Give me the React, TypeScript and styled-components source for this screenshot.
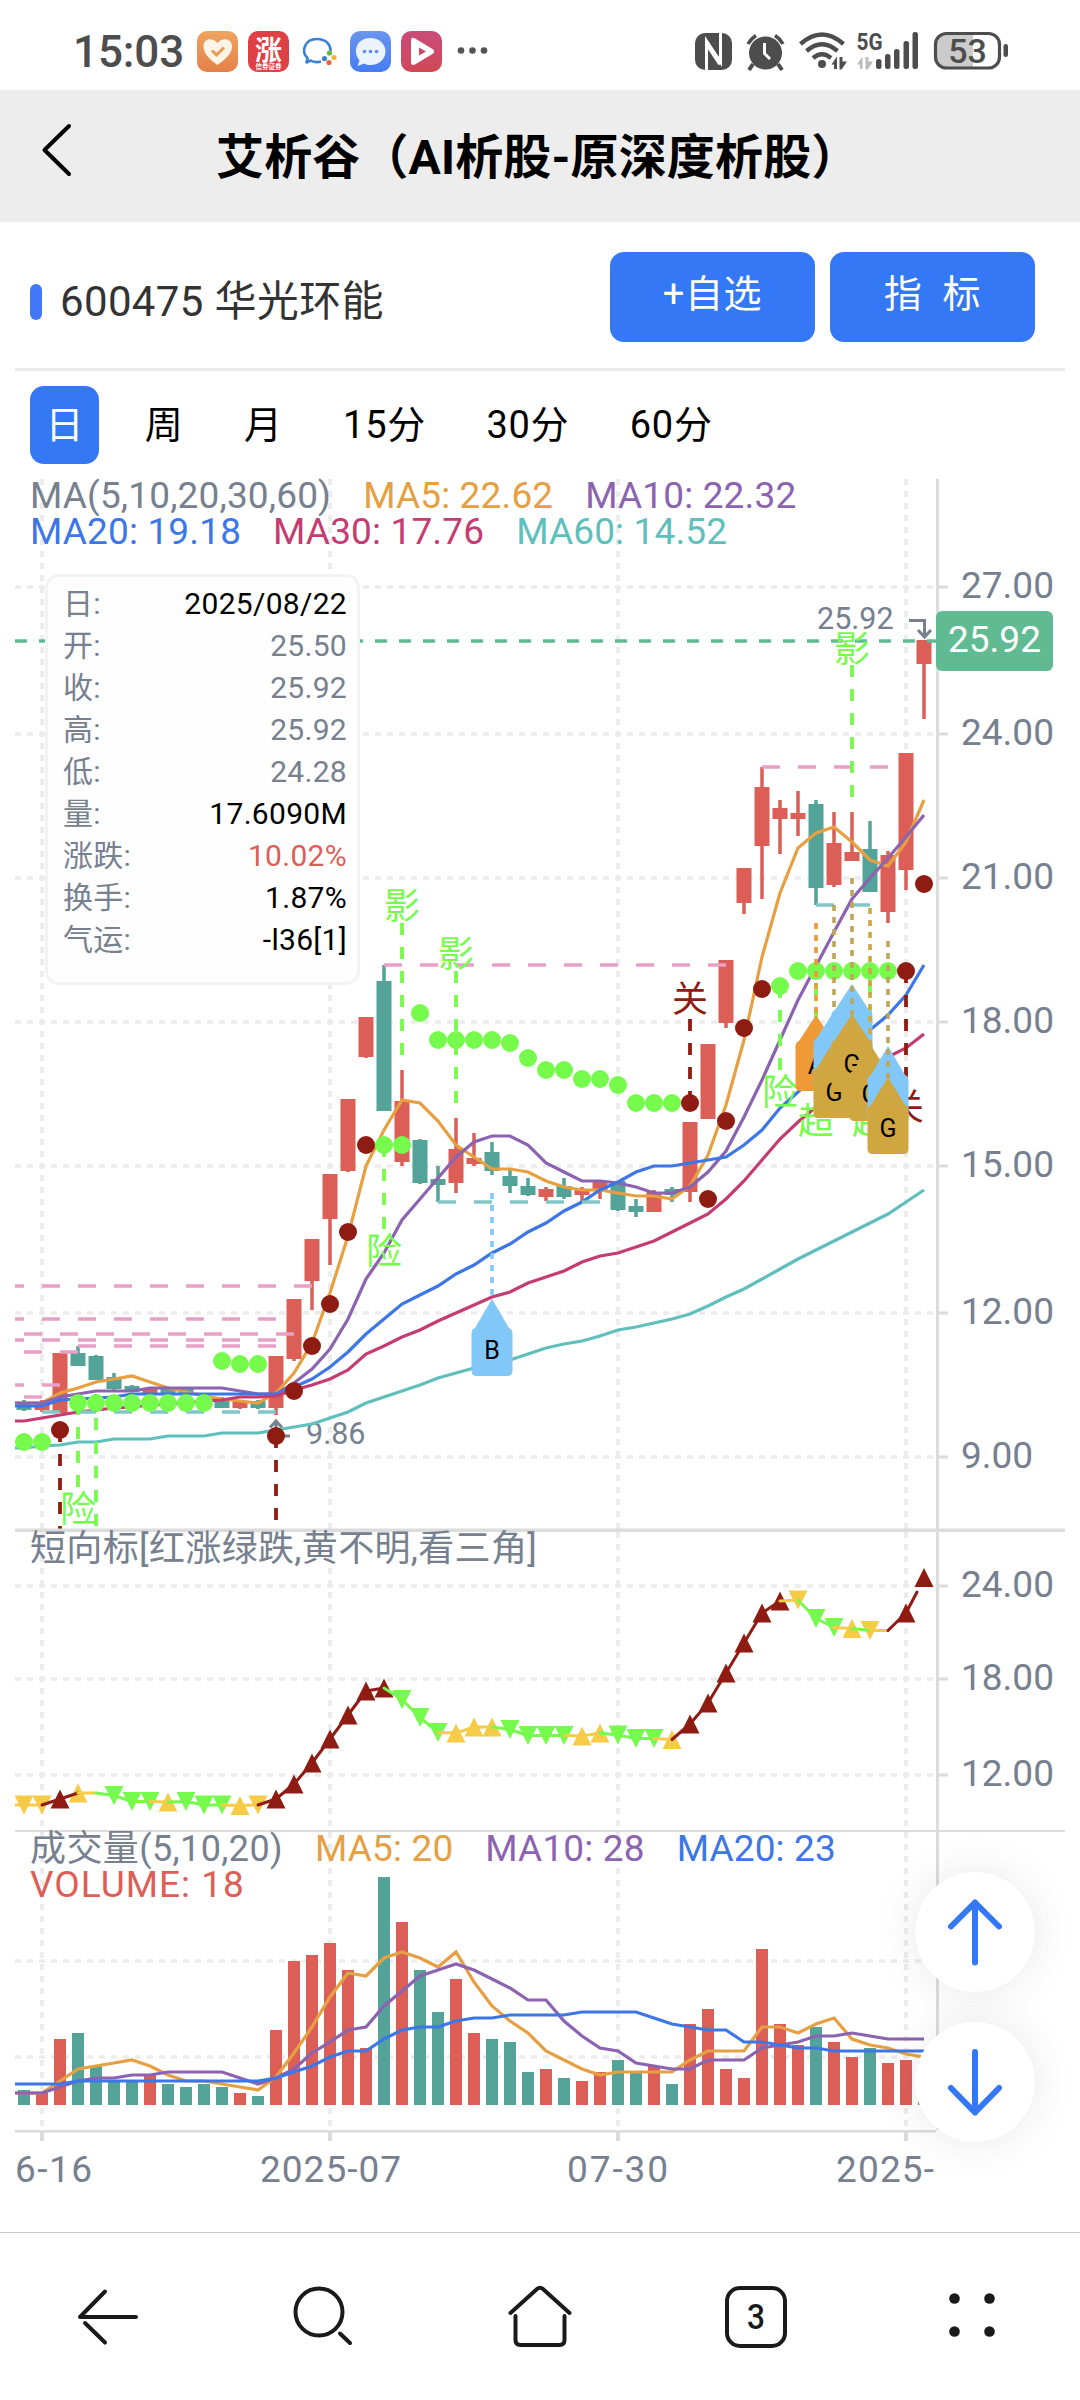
import React from 'react';
import styled, { createGlobalStyle } from 'styled-components';

const FONT = `Roboto, "Noto Sans CJK SC", sans-serif`;

const C = {
  red: '#db5f57',
  teal: '#53a399',
  orange: '#e6a042',
  purple: '#8b63b0',
  blue: '#3d76e6',
  pink: '#c43c71',
  cyan: '#5fbfbd',
  lime: '#76fb4c',
  dark: '#8f1c12',
  yellow: '#f5cb47',
  grey: '#76808f',
  axis: '#dcdcdc',
  grid: '#ececec',
  resist: '#e8a0c6',
  support: '#82c7c8',
  last: '#61bb92',
  primary: '#3478f6',
  sky: '#81c8f8',
  gold: '#cfa640',
  amber: '#ee9a37',
};

const GlobalStyle = createGlobalStyle`
  * { box-sizing: border-box; }
  html, body { margin: 0; padding: 0; background: #fff; }
  body { font-family: ${FONT}; -webkit-font-smoothing: antialiased; }
`;

/* ---------- layout ---------- */

const Screen = styled.div`
  width: 1080px;
  height: 2400px;
  display: flex;
  flex-direction: column;
  background: #fff;
  overflow: hidden;
`;

const StatusBar = styled.header`
  flex: none;
  height: 90px;
  display: flex;
  align-items: center;
  justify-content: space-between;
  padding: 14px 71px 0 73px;
  color: #4d4d4d;
`;

const StatusGroup = styled.div<{ $gap: number }>`
  display: flex;
  align-items: center;
  gap: ${(p) => p.$gap}px;
`;

const Clock = styled.span`
  font-size: 44px;
  line-height: 44px;
  font-weight: 500;
  width: 113px;
  letter-spacing: -0.1px;
`;

const TitleBar = styled.div`
  flex: none;
  height: 132px;
  display: flex;
  align-items: center;
  background: #ededed;
`;

const BackButton = styled.button`
  border: 0;
  background: none;
  padding: 0 0 12px 38px;
  width: 216px;
  text-align: left;
  line-height: 0;
`;

const Title = styled.h1`
  margin: 3px 0 0;
  font-size: 48px;
  line-height: 60px;
  font-weight: 700;
  color: #000;
  white-space: nowrap;
  letter-spacing: 0.15px;
`;

const StockRow = styled.section`
  flex: none;
  display: flex;
  align-items: center;
  height: 149px;
  margin: 0 15px;
  padding: 0 30px 0 15px;
  border-bottom: 3px solid #ebebeb;
`;

const Marker = styled.i`
  width: 12px;
  height: 36px;
  border-radius: 6px;
  background: #4078f8;
  margin-top: 14px;
`;

const StockName = styled.h2`
  flex: 1;
  margin: 14px 0 0 18px;
  font-size: 42px;
  line-height: 50px;
  font-weight: 400;
  color: #333;
  letter-spacing: 0.35px;
`;

const ActionButton = styled.button`
  width: 205px;
  height: 90px;
  margin: 3px 0 0 15px;
  padding: 0 0 5px;
  border: 0;
  border-radius: 14px;
  background: ${C.primary};
  color: #fff;
  font-family: ${FONT};
  font-size: 38px;
  line-height: 44px;
  letter-spacing: 0.6px;
  white-space: pre;
`;

const Tabs = styled.nav`
  flex: none;
  display: flex;
  gap: 30px;
  height: 106px;
  padding: 15px 30px 0;
`;

const Tab = styled.button<{ $active?: boolean }>`
  height: 78px;
  border: 0;
  padding: 0 15px 0 15.5px;
  border-radius: 14px;
  font-family: ${FONT};
  font-size: 38px;
  line-height: 78px;
  letter-spacing: 0.7px;
  background: ${(p) => (p.$active ? C.primary : 'transparent')};
  color: ${(p) => (p.$active ? '#fff' : '#000')};
`;

const ChartArea = styled.main`
  position: relative;
  flex: none;
  display: flex;
  flex-direction: column;
  width: 1050px;
  height: 1755px;
  margin: 0 15px;
`;

const PaneBox = styled.section<{ $height: number }>`
  position: relative;
  flex: none;
  height: ${(p) => p.$height}px;
`;

const PaneSvg = styled.svg`
  display: block;
`;

const Legend = styled.div`
  position: absolute;
  left: 15px;
  top: 1px;
  width: 900px;
`;

const LegendRow = styled.div`
  display: flex;
  gap: 32px;
  height: 36px;
`;

const LegendItem = styled.span<{ $color: string; $size?: number; $spacing?: number }>`
  color: ${(p) => p.$color};
  font-size: ${(p) => p.$size ?? 37}px;
  line-height: 36px;
  letter-spacing: ${(p) => p.$spacing ?? 0.15}px;
  white-space: nowrap;
`;

const Tip = styled.dl`
  position: absolute;
  left: 30px;
  top: 97px;
  width: 315px;
  height: 411px;
  margin: 0;
  padding: 6px 10px 0 15px;
  border: 3px solid #f2f3f4;
  border-radius: 14px;
  background: #fefefe;
`;

const TipRow = styled.div`
  display: flex;
  justify-content: space-between;
  height: 42px;
  font-size: 30px;
  line-height: 42px;
  letter-spacing: 0.3px;
`;

const TipLabel = styled.dt`
  color: ${C.grey};
`;

const TipValue = styled.dd<{ $color?: string }>`
  margin: 0;
  color: ${(p) => p.$color ?? '#000'};
`;

const FloatStack = styled.div`
  position: absolute;
  left: 900px;
  top: 1395px;
  display: flex;
  flex-direction: column;
  gap: 30px;
`;

const FloatButton = styled.button`
  width: 120px;
  height: 120px;
  border: 0;
  padding: 0;
  border-radius: 50%;
  background: #fff;
  box-shadow: 0 0 42px rgba(60, 70, 60, 0.12);
  line-height: 0;
`;

const BottomNav = styled.footer`
  flex: none;
  height: 168px;
  display: flex;
  border-top: 1px solid #c9c9c9;
  background: #fff;
`;

const NavItem = styled.button`
  flex: 1;
  border: 0;
  padding: 51px 0 0;
  background: none;
  display: flex;
  justify-content: center;
  align-items: flex-start;
`;

/* ---------- chart data (page pixels, one slot every 18px) ---------- */

const px = (i: number) => 24 + i * 18;

type Candle = [string, number, number, number, number];
const CANDLES: Candle[] = [
  ['t', 1400, 1402, 1410, 1411],
  ['r', 1400, 1402, 1410, 1412],
  ['r', 1353, 1353, 1413, 1413],
  ['t', 1346, 1353, 1366, 1366],
  ['t', 1355, 1356, 1380, 1380],
  ['t', 1373, 1377, 1389, 1391],
  ['t', 1385, 1386, 1392, 1392],
  ['r', 1389, 1389, 1394, 1394],
  ['t', 1389, 1389, 1395, 1395],
  ['t', 1389, 1389, 1395, 1395],
  ['t', 1398, 1398, 1403, 1403],
  ['t', 1397, 1401, 1408, 1408],
  ['r', 1401, 1401, 1408, 1409],
  ['t', 1400, 1401, 1408, 1409],
  ['r', 1356, 1356, 1408, 1415],
  ['r', 1299, 1299, 1359, 1361],
  ['r', 1239, 1239, 1281, 1310],
  ['r', 1174, 1174, 1219, 1265],
  ['r', 1099, 1099, 1171, 1172],
  ['r', 1017, 1017, 1057, 1058],
  ['t', 965, 981, 1111, 1111],
  ['r', 1070, 1101, 1162, 1166],
  ['t', 1139, 1140, 1183, 1184],
  ['t', 1166, 1179, 1185, 1202],
  ['r', 1118, 1149, 1183, 1193],
  ['r', 1133, 1158, 1164, 1166],
  ['t', 1142, 1152, 1171, 1175],
  ['t', 1170, 1176, 1186, 1193],
  ['t', 1178, 1186, 1195, 1196],
  ['r', 1187, 1189, 1197, 1201],
  ['t', 1178, 1186, 1197, 1199],
  ['r', 1187, 1189, 1195, 1201],
  ['r', 1181, 1181, 1190, 1199],
  ['t', 1181, 1181, 1210, 1211],
  ['t', 1199, 1206, 1212, 1217],
  ['r', 1190, 1192, 1212, 1212],
  ['t', 1187, 1189, 1195, 1202],
  ['r', 1122, 1122, 1192, 1202],
  ['r', 1044, 1044, 1119, 1119],
  ['r', 960, 960, 1023, 1028],
  ['r', 868, 868, 903, 914],
  ['r', 767, 787, 846, 899],
  ['r', 800, 808, 819, 854],
  ['r', 791, 813, 819, 836],
  ['t', 800, 804, 888, 905],
  ['r', 812, 843, 885, 887],
  ['r', 812, 852, 861, 861],
  ['t', 821, 849, 892, 892],
  ['r', 851, 855, 912, 923],
  ['r', 753, 753, 870, 890],
  ['r', 640, 640, 664, 719],
];

const MA5 = [
  1403, 1403, 1393, 1388, 1382, 1379, 1376, 1382, 1388, 1392, 1396, 1399, 1401, 1403, 1393, 1373, 1343, 1293, 1236,
  1166, 1130, 1100, 1103, 1121, 1145, 1157, 1169, 1169, 1172, 1181, 1187, 1190, 1190, 1193, 1196, 1196, 1199, 1186,
  1155, 1105, 1040, 957, 893, 848, 833, 827, 842, 860, 866, 842, 800,
];
const MA10 = [
  1403, 1403, 1397, 1394, 1391, 1391, 1391, 1388, 1388, 1388, 1388, 1388, 1391, 1394, 1394, 1383, 1369, 1349, 1319,
  1279, 1253, 1220, 1199, 1178, 1157, 1142, 1136, 1136, 1145, 1163, 1172, 1181, 1181, 1183, 1187, 1193, 1193, 1187,
  1172, 1151, 1117, 1080, 1040, 1000, 966, 932, 899, 878, 858, 837, 815,
];
const MA20 = [
  1406, 1406, 1400, 1399, 1398, 1397, 1394, 1394, 1394, 1394, 1394, 1394, 1394, 1394, 1394, 1387, 1379, 1367, 1352,
  1334, 1319, 1304, 1295, 1286, 1274, 1265, 1253, 1244, 1232, 1223, 1211, 1202, 1190, 1182, 1172, 1166, 1166, 1163,
  1160, 1157, 1145, 1130, 1108, 1092, 1075, 1058, 1044, 1030, 1015, 995, 965,
];
const MA30 = [
  1421, 1418, 1415, 1412, 1410, 1408, 1407, 1405, 1404, 1403, 1401, 1400, 1397, 1397, 1396, 1390, 1385, 1379, 1370,
  1354, 1346, 1337, 1330, 1321, 1313, 1305, 1297, 1292, 1283, 1277, 1271, 1262, 1256, 1253, 1247, 1241, 1232, 1223,
  1214, 1199, 1181, 1160, 1139, 1122, 1107, 1094, 1080, 1066, 1057, 1048, 1034,
];
const MA60 = [
  1448, 1446, 1445, 1442, 1442, 1439, 1439, 1439, 1436, 1436, 1436, 1433, 1433, 1433, 1430, 1427, 1424, 1418, 1412,
  1403, 1397, 1391, 1385, 1378, 1373, 1368, 1364, 1360, 1354, 1348, 1344, 1341, 1336, 1330, 1327, 1323, 1319, 1314,
  1306, 1297, 1289, 1279, 1269, 1259, 1250, 1241, 1232, 1223, 1214, 1202, 1190,
];

type Dot = [number, number, string];
const run = (from: number, to: number, y: number, color: string): Dot[] =>
  Array.from({ length: to - from + 1 }, (_, k) => [from + k, y, color] as Dot);

const DOTS: Dot[] = [
  ...run(0, 1, 1442, C.lime),
  [2, 1430, C.dark],
  ...run(3, 10, 1403, C.lime),
  [11, 1361, C.lime],
  ...run(12, 13, 1364, C.lime),
  [14, 1436, C.dark], [15, 1391, C.dark], [16, 1346, C.dark], [17, 1304, C.dark], [18, 1232, C.dark], [19, 1145, C.dark],
  ...run(20, 21, 1145, C.lime),
  [22, 1013, C.lime],
  ...run(23, 26, 1040, C.lime),
  [27, 1043, C.lime], [28, 1058, C.lime],
  ...run(29, 30, 1070, C.lime),
  ...run(31, 32, 1079, C.lime),
  [33, 1085, C.lime],
  ...run(34, 36, 1103, C.lime),
  [37, 1103, C.dark], [38, 1199, C.dark], [39, 1121, C.dark], [40, 1028, C.dark], [41, 989, C.dark],
  [42, 986, C.lime],
  ...run(43, 48, 971, C.lime),
  [49, 971, C.dark], [50, 884, C.dark],
];

const LEVELS: [number, number, number, string][] = [
  [1286, 6, 312, C.resist], [1319, 6, 276, C.resist], [1334, 24, 294, C.resist], [1340, 6, 276, C.resist],
  [1346, 78, 276, C.resist], [1352, 24, 78, C.resist], [1385, 6, 60, C.resist], [1397, 24, 42, C.resist],
  [965, 384, 726, C.resist], [767, 762, 888, C.resist],
  [1412, 42, 276, C.support], [1202, 438, 600, C.support], [905, 816, 870, C.support],
];

const STEMS: [number, number, number, string][] = [
  [60, 1430, 1529, C.dark], [276, 1436, 1520, C.dark], [78, 1403, 1488, C.lime], [96, 1394, 1528, C.lime],
  [384, 1145, 1230, C.lime], [402, 923, 1056, C.lime], [456, 971, 1104, C.lime], [690, 1019, 1104, C.dark],
  [780, 986, 1071, C.lime], [816, 983, 1100, C.lime], [870, 983, 1100, C.lime], [852, 665, 798, C.lime],
  [906, 971, 1086, C.dark],
];

const SIGNS: [number, number, string, string][] = [
  [78, 1522, '险', C.lime], [384, 1264, '险', C.lime], [402, 919, '影', C.lime], [456, 967, '影', C.lime],
  [690, 1012, '关', C.dark], [780, 1105, '险', C.lime], [816, 1134, '超', C.lime], [870, 1134, '超', C.lime],
  [852, 662, '影', C.lime], [906, 1120, '关', C.dark],
];

/* y, direction, colour of the marker, colour of the segment leading to it */
const TREND: [number, string, string, string?][] = [
  [1805, 'd', 'y'], [1805, 'd', 'y'], [1799, 'u', 'r'], [1793, 'u', 'y', 'r'], [1793, '', 'y'],
  [1795.5, 'd', 'g'], [1801.5, 'd', 'g'], [1801.5, 'd', 'g'], [1802, 'u', 'y'], [1801.5, 'd', 'g'],
  [1805, 'd', 'g'], [1805, 'd', 'g'], [1805.5, 'u', 'y'], [1805, 'd', 'y'], [1799, 'u', 'r'],
  [1784, 'u', 'r'], [1763, 'u', 'r'], [1739, 'u', 'r'], [1715, 'u', 'r'], [1691, 'u', 'r'], [1688, 'u', 'r'],
  [1699.5, 'd', 'g'], [1717.5, 'd', 'g'], [1732.5, 'd', 'g'], [1733, 'u', 'y'], [1727, 'u', 'y'], [1727, 'u', 'y'],
  [1729.5, 'd', 'g'], [1735.5, 'd', 'g'], [1735.5, 'd', 'g'], [1735.5, 'd', 'g'], [1736, 'u', 'y'], [1733, 'u', 'y'],
  [1735, 'd', 'g'], [1738.5, 'd', 'g'], [1738.5, 'd', 'g'], [1739.5, 'u', 'y'], [1724, 'u', 'r'], [1703, 'u', 'r'],
  [1673, 'u', 'r'], [1643, 'u', 'r'], [1613, 'u', 'r'], [1601, 'u', 'r'], [1600, 'd', 'y'], [1618.5, 'd', 'g'],
  [1627.5, 'd', 'g'], [1628.5, 'u', 'y'], [1630.5, 'd', 'y', 'g'], [1630.5, '', 'y'], [1613, 'u', 'r'], [1577.5, 'u', 'r'],
];
const TREND_COLOR: Record<string, string> = { y: C.yellow, r: C.dark, g: C.lime };

const VOLUME: [string, number][] = [
  ['t', 2090], ['r', 2093], ['r', 2039], ['t', 2033], ['t', 2066], ['t', 2081], ['t', 2081], ['r', 2075], ['t', 2084],
  ['t', 2087], ['t', 2084], ['t', 2087], ['r', 2093], ['t', 2096], ['r', 2030], ['r', 1961], ['r', 1955], ['r', 1943],
  ['r', 1970], ['r', 2048], ['t', 1877], ['r', 1922], ['t', 1970], ['t', 2012], ['r', 1979], ['r', 2033], ['t', 2039],
  ['t', 2042], ['t', 2072], ['r', 2069], ['t', 2078], ['r', 2081], ['r', 2072], ['t', 2060], ['t', 2072], ['r', 2066],
  ['t', 2084], ['r', 2024], ['r', 2009], ['r', 2069], ['r', 2078], ['r', 1949], ['r', 2024], ['r', 2045], ['t', 2027],
  ['r', 2042], ['r', 2057], ['t', 2048], ['r', 2063], ['r', 2060], ['r', 2062],
];
const VMA5 = [
  2093, 2093, 2081, 2069, 2066, 2063, 2060, 2066, 2075, 2081, 2081, 2084, 2087, 2090, 2077, 2053, 2027, 1997, 1973,
  1976, 1958, 1952, 1958, 1967, 1952, 1982, 2006, 2021, 2033, 2051, 2060, 2069, 2075, 2072, 2072, 2072, 2072, 2060,
  2051, 2051, 2051, 2027, 2027, 2033, 2024, 2018, 2039, 2045, 2048, 2054, 2057,
];
const VMA10 = [
  2093, 2093, 2087, 2081, 2078, 2078, 2075, 2075, 2072, 2072, 2072, 2072, 2078, 2084, 2078, 2069, 2053, 2042, 2030,
  2027, 2006, 1991, 1976, 1970, 1964, 1970, 1979, 1988, 2000, 2000, 2021, 2036, 2048, 2051, 2063, 2066, 2069, 2069,
  2060, 2060, 2060, 2048, 2045, 2042, 2036, 2036, 2033, 2036, 2039, 2039, 2039,
];
const VMA20 = [
  2084, 2084, 2084, 2081, 2081, 2081, 2081, 2081, 2081, 2081, 2081, 2081, 2081, 2081, 2078, 2072, 2066, 2057, 2051,
  2051, 2039, 2030, 2027, 2027, 2021, 2018, 2018, 2015, 2015, 2015, 2015, 2012, 2012, 2012, 2012, 2018, 2024, 2027,
  2030, 2030, 2042, 2042, 2045, 2048, 2048, 2051, 2051, 2051, 2051, 2051, 2051,
];

/* ---------- chart parts ---------- */

const GRID_X = [42, 330, 618, 906];

const Grid = ({ top, bottom, rows }: { top: number; bottom: number; rows: number[] }) => (
  <g stroke={C.grid} strokeWidth={4} strokeDasharray="6 6">
    {rows.map((y) => (
      <line key={y} x1={15} x2={937} y1={y} y2={y} strokeWidth={3.5} />
    ))}
    {GRID_X.map((x) => (
      <line key={x} x1={x} x2={x} y1={top} y2={bottom} />
    ))}
  </g>
);

const AxisLabels = ({ rows }: { rows: [number, string][] }) => (
  <g>
    {rows.map(([y, label]) => (
      <React.Fragment key={label}>
        <line x1={939} x2={948} y1={y} y2={y} stroke={C.axis} strokeWidth={3} />
        <text x={961} y={y + 11} fontSize={37} fontFamily={FONT} fill={C.grey}>
          {label}
        </text>
      </React.Fragment>
    ))}
  </g>
);

const Line = ({ data, color }: { data: number[]; color: string }) => (
  <polyline
    fill="none"
    stroke={color}
    strokeWidth={3.2}
    points={[`15,${data[0]}`, ...data.map((y, i) => `${px(i)},${y}`)].join(' ')}
  />
);

const Pin = ({ x, tip, shoulder, bottom, color, label, textY }: {
  x: number; tip: number; shoulder: number; bottom: number; color: string; label?: string; textY?: number;
}) => (
  <g>
    <path
      fill={color}
      d={`M${x} ${tip} L${x + 17} ${shoulder - 3} Q${x + 20.5} ${shoulder - 2} ${x + 20.5} ${shoulder + 3} V${bottom - 5}
        Q${x + 20.5} ${bottom} ${x + 15.5} ${bottom} H${x - 15.5} Q${x - 20.5} ${bottom} ${x - 20.5} ${bottom - 5}
        V${shoulder + 3} Q${x - 20.5} ${shoulder - 2} ${x - 17} ${shoulder - 3} Z`}
    />
    {label && (
      <text x={x} y={textY} fontSize={25} fontFamily={FONT} fill="#000" textAnchor="middle">{label}</text>
    )}
  </g>
);

const Dotted = ({ x, y1, y2, color }: { x: number; y1: number; y2: number; color: string }) => (
  <line x1={x} x2={x} y1={y1} y2={y2} stroke={color} strokeWidth={3.6} strokeDasharray="6 6" />
);

const PriceSvg = () => (
  <PaneSvg width={1050} height={1053} viewBox="15 477 1050 1053">
    <Grid top={479} bottom={1530} rows={[587, 734, 878, 1022, 1166, 1313, 1457]} />
    <rect x={936} y={479} width={3} height={1051} fill={C.axis} />
    {CANDLES.map(([k, hi, a, b, lo], i) => {
      const color = k === 'r' ? C.red : C.teal;
      return (
        <g key={i} fill={color}>
          <rect x={px(i) - 1.75} y={hi} width={3.5} height={lo - hi} />
          <rect x={px(i) - 7.5} y={a} width={15} height={b - a} />
        </g>
      );
    })}
    <g fill="none" stroke={C.grey} strokeWidth={3}>
      <path d="M909 620.5 H924.5 V637 M918 630 L924.5 637 L931 630" />
      <path d="M290 1436 H276 V1421 M270 1427.5 L276 1421 L282 1427.5" />
    </g>
    <text x={817} y={629} fontSize={30.5} fontFamily={FONT} fill={C.grey}>25.92</text>
    <text x={306} y={1444} fontSize={30.5} fontFamily={FONT} fill={C.grey}>9.86</text>
    <Line data={MA5} color={C.orange} />
    <Line data={MA10} color={C.purple} />
    <Line data={MA20} color={C.blue} />
    <Line data={MA30} color={C.pink} />
    <Line data={MA60} color={C.cyan} />
    {LEVELS.map(([y, x1, x2, color], i) => (
      <line key={i} x1={x1} x2={x2} y1={y} y2={y} stroke={color} strokeWidth={3.4} strokeDasharray="18 18" />
    ))}
    {STEMS.map(([x, y1, y2, color], i) => (
      <line key={i} x1={x} x2={x} y1={y1} y2={y2} stroke={color} strokeWidth={3.8} strokeDasharray="12 12" />
    ))}
    {DOTS.map(([i, y, color]) => (
      <circle key={i} cx={px(i)} cy={y} r={9} fill={color} />
    ))}
    <line x1={15} x2={936} y1={641} y2={641} stroke={C.last} strokeWidth={3.4} strokeDasharray="12 12" />
    {SIGNS.map(([x, y, label, color], i) => (
      <text key={i} x={x} y={y} fontSize={36} fontFamily={FONT} fill={color} textAnchor="middle">{label}</text>
    ))}
    <Dotted x={492} y1={1193} y2={1300} color={C.sky} />
    <Pin x={492} tip={1299} shoulder={1331} bottom={1376} color={C.sky} label="B" textY={1359} />
    <Dotted x={816} y1={923} y2={1015} color={C.amber} />
    <Pin x={816} tip={1015} shoulder={1044} bottom={1091} color={C.amber} label="A" textY={1074} />
    <Pin x={834} tip={1011} shoulder={1041} bottom={1088} color={C.sky} />
    <Dotted x={834} y1={905} y2={1040} color="#bda65a" />
    <Pin x={834} tip={1041} shoulder={1071} bottom={1118} color={C.gold} label="G" textY={1101} />
    <Pin x={852} tip={984} shoulder={1013} bottom={1060} color={C.sky} />
    <Dotted x={852} y1={878} y2={1015} color="#bda65a" />
    <Pin x={852} tip={1014} shoulder={1043} bottom={1090} color={C.gold} label="G" textY={1073} />
    <Dotted x={870} y1={908} y2={1044} color={C.gold} />
    <Pin x={870} tip={1044} shoulder={1074} bottom={1121} color={C.gold} label="G" textY={1103} />
    <Pin x={888} tip={1046} shoulder={1078} bottom={1124} color={C.sky} />
    <Dotted x={888} y1={941} y2={1078} color="#bda65a" />
    <Pin x={888} tip={1077} shoulder={1108} bottom={1154} color={C.gold} label="G" textY={1137} />
    <AxisLabels
      rows={[[587, '27.00'], [734, '24.00'], [878, '21.00'], [1022, '18.00'], [1166, '15.00'], [1313, '12.00'], [1457, '9.00']]}
    />
    <rect x={936} y={611} width={117} height={60} rx={6} fill={C.last} />
    <text x={948} y={652} fontSize={37} fontFamily={FONT} fill="#fff">25.92</text>
    <rect x={15} y={1528.5} width={1050} height={3} fill={C.axis} />
  </PaneSvg>
);

const TrendSvg = () => (
  <PaneSvg width={1050} height={300} viewBox="15 1530 1050 300">
    <rect x={15} y={1529} width={1050} height={3} fill={C.axis} />
    <Grid top={1532} bottom={1830} rows={[1586, 1679, 1775]} />
    <rect x={936} y={1530} width={3} height={300} fill={C.axis} />
    {TREND.map(([y, dir, c], i) => {
      const x = px(i);
      if (!dir) return null;
      const s = dir === 'u' ? 1 : -1;
      return <polygon key={i} fill={TREND_COLOR[c]} points={`${x - 9.5},${y + 9.5 * s} ${x + 9.5},${y + 9.5 * s} ${x},${y - 9.5 * s}`} />;
    })}
    {TREND.map(([y, , c, seg], i) => {
      const last = i === 50;
      return (
        <line
          key={i}
          x1={i ? px(i - 1) : 15}
          y1={i ? TREND[i - 1][0] : y}
          x2={last ? 917 : px(i)}
          y2={last ? 1592 : y}
          stroke={TREND_COLOR[seg ?? c]}
          strokeWidth={3}
          strokeLinecap="round"
        />
      );
    })}
    <AxisLabels rows={[[1586, '24.00'], [1679, '18.00'], [1775, '12.00']]} />
  </PaneSvg>
);

const VolumeSvg = () => (
  <PaneSvg width={1050} height={300} viewBox="15 1830 1050 300">
    <Grid top={1832} bottom={2130} rows={[1961, 2057]} />
    <rect x={15} y={1829} width={1050} height={3} fill={C.axis} />
    <rect x={936} y={1830} width={3} height={300} fill={C.axis} />
    {VOLUME.map(([k, y], i) => (
      <rect key={i} x={px(i) - 6} y={y} width={12} height={2105 - y} fill={k === 'r' ? C.red : C.teal} />
    ))}
    <Line data={VMA5} color={C.orange} />
    <Line data={VMA10} color={C.purple} />
    <Line data={VMA20} color={C.blue} />
  </PaneSvg>
);

const TimeAxisSvg = () => (
  <PaneSvg width={1050} height={102} viewBox="15 2130 1050 102">
    <rect x={15} y={2129} width={921} height={3.5} fill={C.axis} />
    {GRID_X.map((x) => (
      <rect key={x} x={x - 2} y={2132} width={4} height={9} fill={C.axis} />
    ))}
    <g fontSize={37} fontFamily={FONT} fill={C.grey}>
      <text x={15} y={2182} textLength={77}>6-16</text>
      <text x={260} y={2182} textLength={141}>2025-07</text>
      <text x={567} y={2182} textLength={101}>07-30</text>
      <text x={836} y={2182} textLength={98}>2025-</text>
    </g>
  </PaneSvg>
);

/* ---------- status bar icons ---------- */

const AppIcons = () => (
  <svg width={296} height={42} viewBox="194 31 296 42">
    <defs>
      <linearGradient id="ga" x1="0" y1="0" x2="0" y2="1"><stop offset="0" stopColor="#eea45f" /><stop offset="1" stopColor="#e5804a" /></linearGradient>
      <linearGradient id="gb" x1="0" y1="0" x2="0" y2="1"><stop offset="0" stopColor="#6a96ee" /><stop offset="1" stopColor="#457df3" /></linearGradient>
      <linearGradient id="gc" x1="0" y1="0" x2="0" y2="1"><stop offset="0" stopColor="#c94c7c" /><stop offset="1" stopColor="#cf4954" /></linearGradient>
    </defs>
    <rect x={197} y={31} width={41} height={41} rx={10} fill="url(#ga)" />
    <path d="M217.500 65 C209 59 203.500 53 203.500 46.500 C203.500 38 213 37 217.500 43 C222 37 232 38 232 46.500 C232 53 226 59 217.500 65Z" fill="#fdf3e6" />
    <path d="M212 50.500 L216.500 55 L224 47.500" fill="none" stroke="#e99b52" strokeWidth={3} />
    <rect x={248} y={31} width={41} height={41} rx={10} fill="#df4044" />
    <text x={268.500} y={60} fontSize={27} fontWeight={700} fontFamily={FONT} fill="#fff" textAnchor="middle">涨</text>
    <text x={268.500} y={69} fontSize={6.500} fontWeight={700} fontFamily={FONT} fill="#fff" textAnchor="middle">信券证券</text>
    <path d="M321 61.500 C317 62.500 313 62 310.500 60.500 L306.500 62.500 L307.500 58 C301 52 304 39 317 39 C327 39 331 46 330.500 51" fill="none" stroke="#3a80d6" strokeWidth={2.600} strokeLinejoin="round" />
    <circle cx={329.500} cy={53} r={2.600} fill="#5fb83c" />
    <circle cx={324.500} cy={58.500} r={2.600} fill="#3a80d6" />
    <circle cx={334} cy={57.500} r={2.600} fill="#f1b734" />
    <circle cx={329} cy={62.500} r={2.600} fill="#e2663a" />
    <rect x={350} y={31} width={41} height={41} rx={10} fill="url(#gb)" />
    <path d="M370.500 38 C379 38 385.500 44 385.500 51.500 C385.500 59 379 65 370.500 65 C368 65 366 64.500 364 63.500 L357.500 66 L359.500 60.500 C352 51 357 38 370.500 38Z" fill="#eaf3fe" />
    <g fill="#5a8df0"><circle cx={364.500} cy={51.500} r={1.800} /><circle cx={370.500} cy={51.500} r={1.800} /><circle cx={376.500} cy={51.500} r={1.800} /></g>
    <rect x={401} y={31} width={41} height={41} rx={10} fill="url(#gc)" />
    <path d="M411 40.500 Q411 36.500 415 38.500 L432.500 49 Q436 51.500 432.500 54 L415 64.500 Q411 66 411 62Z" fill="#fff" />
    <path d="M419 47.500 L426 51.500 L419 55.500Z" fill="#cb4a68" />
    <g fill="#555"><circle cx={461} cy={50.500} r={3.300} /><circle cx={472.500} cy={50.500} r={3.300} /><circle cx={484} cy={50.500} r={3.300} /></g>
  </svg>
);

const SystemIcons = () => (
  <svg width={316} height={44} viewBox="693 30 316 44">
    <g fill="#4d4d4d">
      <rect x={695} y={33} width={37} height={37} rx={10} />
      <path d="M706.500 71 V41 L720.500 62 V32" fill="none" stroke="#fff" strokeWidth={3} />
      <path d="M706.500 43 L720.500 64" stroke="#fff" strokeWidth={4.500} />
      <circle cx={765.500} cy={53} r={16.500} />
      <path d="M748 44 A23 23 0 0 1 756 35.500 M775 35.500 A23 23 0 0 1 783 44" fill="none" stroke="#4d4d4d" strokeWidth={3.600} />
      <path d="M753 64 L749 70 M778 64 L782 70" stroke="#4d4d4d" strokeWidth={4} />
      <path d="M764.500 43 V53.500 L770 59" fill="none" stroke="#fff" strokeWidth={3} />
      <g fill="none" stroke="#4d4d4d" strokeWidth={4.400}>
        <path d="M800.500 44 Q822 25 843.500 44" />
        <path d="M806.500 51 Q822 37.500 837.500 51" />
        <path d="M813 58 Q822 50.500 831 58" />
      </g>
      <circle cx={822} cy={64} r={4} />
      <path d="M831.500 64.500 L837 56.500 V69 H834 V64.500Z M847 61.500 L841.500 69.500 H839.500 V57 H842.500 V61.500Z" />
      <text x={856.500} y={50} fontSize={23} fontWeight={700} fontFamily={FONT} textLength={26} lengthAdjust="spacingAndGlyphs">5G</text>
      <g fill="#bdbdbd"><path d="M857 64.500 L862.500 56.500 V69 H860 V64.500Z M873 61.500 L868 69.500 H865.500 V57 H868.500 V61.500Z" /></g>
      <rect x={876} y={59} width={5.500} height={10} rx={2.500} />
      <rect x={885} y={54} width={5.500} height={15} rx={2.500} />
      <rect x={894} y={49} width={5.500} height={20} rx={2.500} />
      <rect x={903.500} y={41} width={5.500} height={28} rx={2.500} />
      <rect x={912.500} y={32} width={5.500} height={37} rx={2.500} />
      <path d="M946 33.500 H973 V67.500 H946 Q936 67.500 936 57 V44 Q936 33.500 946 33.500Z" fill="#cbcbcb" />
      <rect x={935.500} y={33.500} width={64} height={34.500} rx={11} fill="none" stroke="#4d4d4d" strokeWidth={3.200} />
      <rect x={1003.500} y={44} width={4.500} height={13} rx={2.200} />
      <text x={967.500} y={62.500} fontSize={34} fontWeight={500} fontFamily={FONT} textAnchor="middle">53</text>
    </g>
  </svg>
);

const Arrow = ({ down }: { down?: boolean }) => (
  <svg width={120} height={120} viewBox="0 0 120 120" fill="none" stroke={C.primary} strokeWidth={6} strokeLinecap="round" strokeLinejoin="round">
    <path d={down ? 'M60 30 V90.500 M36 66 L60 90.500 L84 66' : 'M60 90.500 V30.500 M36 54.500 L60 30.500 L84 54.500'} />
  </svg>
);

const INK = '#1a1a1a';
const NavSvg = styled.svg.attrs({ width: 72, height: 68, fill: 'none', stroke: INK, strokeWidth: 4, strokeLinecap: 'round' as const })`
  display: block;
`;

const TIP_ROWS: [string, string, string?][] = [
  ['日:', '2025/08/22'],
  ['开:', '25.50', C.grey],
  ['收:', '25.92', C.grey],
  ['高:', '25.92', C.grey],
  ['低:', '24.28', C.grey],
  ['量:', '17.6090M'],
  ['涨跌:', '10.02%', C.red],
  ['换手:', '1.87%'],
  ['气运:', '-l36[1]'],
];

export default function App() {
  return (
    <>
      <GlobalStyle />
      <Screen>
        <StatusBar>
          <StatusGroup $gap={8}>
            <Clock>15:03</Clock>
            <AppIcons />
          </StatusGroup>
          <StatusGroup $gap={0}>
            <SystemIcons />
          </StatusGroup>
        </StatusBar>

        <TitleBar>
          <BackButton>
            <svg width={36} height={56} viewBox="0 0 36 56" fill="none" stroke="#000" strokeWidth={4} strokeLinecap="round" strokeLinejoin="round">
              <path d="M31 4 L6.500 28 L31 52" />
            </svg>
          </BackButton>
          <Title>艾析谷（AI析股-原深度析股）</Title>
        </TitleBar>

        <StockRow>
          <Marker />
          <StockName>600475 华光环能</StockName>
          <ActionButton>+自选</ActionButton>
          <ActionButton>{'指  标'}</ActionButton>
        </StockRow>

        <Tabs>
          {['日', '周', '月', '15分', '30分', '60分'].map((t, i) => (
            <Tab key={t} $active={i === 0}>{t}</Tab>
          ))}
        </Tabs>

        <ChartArea>
          <PaneBox $height={1053}>
            <PriceSvg />
            <Legend>
              <LegendRow>
                <LegendItem $color={C.grey}>MA(5,10,20,30,60)</LegendItem>
                <LegendItem $color={C.orange}>MA5: 22.62</LegendItem>
                <LegendItem $color={C.purple}>MA10: 22.32</LegendItem>
              </LegendRow>
              <LegendRow>
                <LegendItem $color={C.blue}>MA20: 19.18</LegendItem>
                <LegendItem $color={C.pink}>MA30: 17.76</LegendItem>
                <LegendItem $color={C.cyan}>MA60: 14.52</LegendItem>
              </LegendRow>
            </Legend>
            <Tip>
              {TIP_ROWS.map(([label, value, color]) => (
                <TipRow key={label}>
                  <TipLabel>{label}</TipLabel>
                  <TipValue $color={color}>{value}</TipValue>
                </TipRow>
              ))}
            </Tip>
          </PaneBox>
          <PaneBox $height={300}>
            <TrendSvg />
            <Legend>
              <LegendRow>
                <LegendItem $color={C.grey} $size={36} $spacing={0.35}>短向标[红涨绿跌,黄不明,看三角]</LegendItem>
              </LegendRow>
            </Legend>
          </PaneBox>
          <PaneBox $height={300}>
            <VolumeSvg />
            <Legend>
              <LegendRow>
                <LegendItem $color={C.grey} $size={36} $spacing={0.4}>成交量(5,10,20)</LegendItem>
                <LegendItem $color={C.orange}>MA5: 20</LegendItem>
                <LegendItem $color={C.purple}>MA10: 28</LegendItem>
                <LegendItem $color={C.blue}>MA20: 23</LegendItem>
              </LegendRow>
              <LegendRow>
                <LegendItem $color={C.red} $spacing={1}>VOLUME: 18</LegendItem>
              </LegendRow>
            </Legend>
          </PaneBox>
          <PaneBox $height={102}>
            <TimeAxisSvg />
          </PaneBox>
          <FloatStack>
            <FloatButton><Arrow /></FloatButton>
            <FloatButton><Arrow down /></FloatButton>
          </FloatStack>
        </ChartArea>

        <BottomNav>
          <NavItem>
            <NavSvg viewBox="72 2284 72 68">
              <path d="M136 2317 H80 L105 2291.500 M85 2323 L105 2342.500" strokeLinejoin="round" />
            </NavSvg>
          </NavItem>
          <NavItem>
            <NavSvg viewBox="288 2284 72 68">
              <circle cx={319} cy={2312} r={23.500} />
              <path d="M340 2333.500 L350 2343" />
            </NavSvg>
          </NavItem>
          <NavItem>
            <NavSvg viewBox="504 2284 72 68">
              <path d="M510.500 2313 L537 2289 Q540 2286.500 543 2289 L569.500 2313 M515.500 2316 V2340 Q515.500 2345 520.500 2345 H559.500 Q564.500 2345 564.500 2340 V2316" />
            </NavSvg>
          </NavItem>
          <NavItem>
            <NavSvg viewBox="720 2284 72 68">
              <rect x={727} y={2288} width={58} height={58} rx={13} />
              <text x={756} y={2328.500} fontSize={35} fontWeight={500} fontFamily={FONT} fill={INK} stroke="none" textAnchor="middle" textLength={18} lengthAdjust="spacingAndGlyphs">3</text>
            </NavSvg>
          </NavItem>
          <NavItem>
            <NavSvg viewBox="936 2284 72 68">
              <g fill={INK} stroke="none">
                <circle cx={954.500} cy={2298.500} r={5.300} />
                <circle cx={989.500} cy={2298.500} r={5.300} />
                <circle cx={954.500} cy={2331.500} r={5.300} />
                <circle cx={989.500} cy={2331.500} r={5.300} />
              </g>
            </NavSvg>
          </NavItem>
        </BottomNav>
      </Screen>
    </>
  );
}
